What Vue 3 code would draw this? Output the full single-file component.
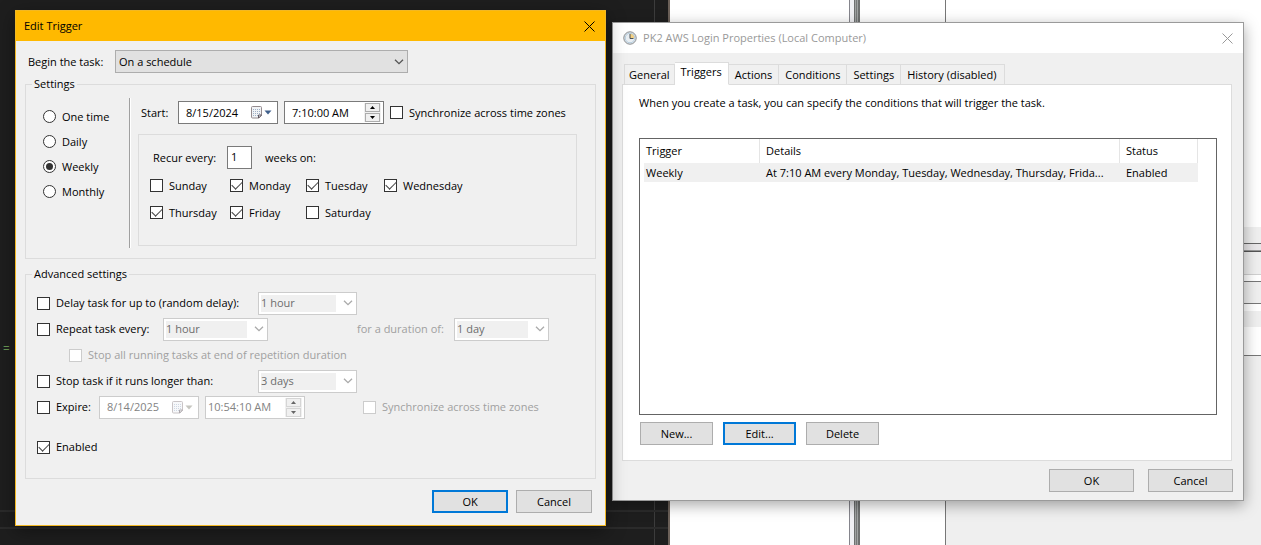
<script setup>
import { ref } from 'vue'

const frequencies = ['One time', 'Daily', 'Weekly', 'Monthly']
const frequency = ref('Weekly')
const days = ref([
  { name: 'Sunday', on: false },
  { name: 'Monday', on: true },
  { name: 'Tuesday', on: true },
  { name: 'Wednesday', on: true },
  { name: 'Thursday', on: true },
  { name: 'Friday', on: true },
  { name: 'Saturday', on: false }
])
const enabled = ref(true)
const tabs = ['General', 'Triggers', 'Actions', 'Conditions', 'Settings', 'History (disabled)']
const activeTab = ref('Triggers')
</script>

<template>
  <div class="desktop">
    <div class="backdrop" aria-hidden="true">
      <div class="editor"><span class="code">=</span></div>
      <div class="page"></div>
      <div class="splitter"></div>
      <div class="pane">
        <div class="stack">
          <i class="s1"></i><i class="s2"></i><i class="s3"></i><i class="s4"></i><i class="s5"></i><i class="s6"></i>
        </div>
      </div>
    </div>

    <section class="window edit" aria-label="Edit Trigger">
      <header class="titlebar">
        <h1>Edit Trigger</h1>
        <button class="close" aria-label="Close">
          <svg width="11" height="11" viewBox="0 0 11 11"><path d="M.5 .5l10 10M10.500 .5l-10 10" /></svg>
        </button>
      </header>

      <div class="begin">
        <label for="begin">Begin the task:</label>
        <span class="combo main">
          <select id="begin"><option>On a schedule</option></select>
          <svg width="10" height="6" viewBox="0 0 10 6"><path d="M1 .7l4 4 4-4" /></svg>
        </span>
      </div>

      <fieldset>
        <legend>Settings</legend>
        <div class="settings">
          <div class="radios">
            <label v-for="f in frequencies" :key="f" class="check">
              <input v-model="frequency" type="radio" name="frequency" :value="f" />{{ f }}
            </label>
          </div>
          <div class="rule"></div>
          <div class="schedule">
            <div class="start">
              <label for="start">Start:</label>
              <span class="field">
                <input id="start" type="text" value="8/15/2024" />
                <button class="calendar" aria-label="Pick start date">
                  <svg width="21" height="13" viewBox="0 0 21 13">
                    <path class="sheet" d="M.5 1.500q0-1 1-1h8q1 0 1 1v8l-2.500 2.500h-6.500q-1 0-1-1z" />
                    <path class="dots" d="M2 3.500h7M2 5.500h7M2 7.500h7M2 9.500h5" />
                    <path class="fold" d="M10.500 9h-3v3z" />
                    <path class="arrow" d="M13.500 4.500h7l-3.500 4z" />
                  </svg>
                </button>
              </span>
              <span class="field">
                <input type="text" value="7:10:00 AM" aria-label="Start time" />
                <span class="spin">
                  <button aria-label="Later"><svg width="5" height="3" viewBox="0 0 5 3"><path d="M0 3l2.500-3 2.500 3z" /></svg></button>
                  <button aria-label="Earlier"><svg width="5" height="3" viewBox="0 0 5 3"><path d="M0 0h5l-2.500 3z" /></svg></button>
                </span>
              </span>
              <label class="check"><input type="checkbox" />Synchronize across time zones</label>
            </div>
            <div class="weekly">
              <div class="recur">
                <label for="recur">Recur every:</label>
                <input id="recur" type="text" value="1" />
                <span>weeks on:</span>
              </div>
              <div class="days">
                <label v-for="d in days" :key="d.name" class="check">
                  <input v-model="d.on" type="checkbox" />{{ d.name }}
                </label>
              </div>
            </div>
          </div>
        </div>
      </fieldset>

      <fieldset class="second">
        <legend>Advanced settings</legend>
        <div class="advanced">
          <div class="line">
            <label class="check lead wide"><input type="checkbox" />Delay task for up to (random delay):</label>
            <span class="combo off">
              <select disabled aria-label="Random delay"><option>1 hour</option></select>
              <svg width="10" height="6" viewBox="0 0 10 6"><path d="M1 .7l4 4 4-4" /></svg>
            </span>
          </div>
          <div class="line">
            <label class="check lead mid"><input type="checkbox" />Repeat task every:</label>
            <span class="combo off long">
              <select disabled aria-label="Repeat interval"><option>1 hour</option></select>
              <svg width="10" height="6" viewBox="0 0 10 6"><path d="M1 .7l4 4 4-4" /></svg>
            </span>
            <label class="duration" for="duration">for a duration of:</label>
            <span class="combo off short">
              <select id="duration" disabled><option>1 day</option></select>
              <svg width="10" height="6" viewBox="0 0 10 6"><path d="M1 .7l4 4 4-4" /></svg>
            </span>
          </div>
          <div class="line nested">
            <label class="check dim"><input type="checkbox" disabled />Stop all running tasks at end of repetition duration</label>
          </div>
          <div class="line">
            <label class="check lead wide"><input type="checkbox" />Stop task if it runs longer than:</label>
            <span class="combo off">
              <select disabled aria-label="Time limit"><option>3 days</option></select>
              <svg width="10" height="6" viewBox="0 0 10 6"><path d="M1 .7l4 4 4-4" /></svg>
            </span>
          </div>
          <div class="line">
            <label class="check lead tight"><input type="checkbox" />Expire:</label>
            <span class="field off">
              <input type="text" value="8/14/2025" disabled aria-label="Expiry date" />
              <button class="calendar" disabled aria-label="Pick expiry date">
                <svg width="21" height="13" viewBox="0 0 21 13">
                  <path class="sheet" d="M.5 1.500q0-1 1-1h8q1 0 1 1v8l-2.500 2.500h-6.500q-1 0-1-1z" />
                  <path class="dots" d="M2 3.500h7M2 5.500h7M2 7.500h7M2 9.500h5" />
                  <path class="fold" d="M10.500 9h-3v3z" />
                  <path class="arrow" d="M13.500 4.500h7l-3.500 4z" />
                </svg>
              </button>
            </span>
            <span class="field off time">
              <input type="text" value="10:54:10 AM" disabled aria-label="Expiry time" />
              <span class="spin">
                <button disabled aria-label="Later"><svg width="5" height="3" viewBox="0 0 5 3"><path d="M0 3l2.500-3 2.500 3z" /></svg></button>
                <button disabled aria-label="Earlier"><svg width="5" height="3" viewBox="0 0 5 3"><path d="M0 0h5l-2.500 3z" /></svg></button>
              </span>
            </span>
            <label class="check dim sync"><input type="checkbox" disabled />Synchronize across time zones</label>
          </div>
          <div class="line last">
            <label class="check"><input v-model="enabled" type="checkbox" />Enabled</label>
          </div>
        </div>
      </fieldset>

      <footer class="edit-actions">
        <button class="btn default">OK</button>
        <button class="btn">Cancel</button>
      </footer>
    </section>

    <section class="window props" aria-label="Task properties">
      <header class="titlebar">
        <svg class="clock" width="14" height="14" viewBox="0 0 14 14">
          <circle cx="7" cy="7" r="6.200" fill="#e9eef2" stroke="#85888b" />
          <path d="M7 7V2.200A4.800 4.800 0 0 1 11.800 7z" fill="#f2cf83" />
          <circle cx="7" cy="7" r="4.800" fill="none" stroke="#b3cbdc" />
          <path d="M7 3v4.500h3.500" fill="none" stroke="#4b5259" />
        </svg>
        <h1>PK2 AWS Login Properties (Local Computer)</h1>
        <button class="close" aria-label="Close">
          <svg width="11" height="11" viewBox="0 0 11 11"><path d="M.5 .5l10 10M10.500 .5l-10 10" /></svg>
        </button>
      </header>

      <div class="tabs" role="tablist">
        <button
          v-for="t in tabs"
          :key="t"
          class="tab"
          :class="{ active: t === activeTab }"
          role="tab"
          :aria-selected="t === activeTab"
          @click="activeTab = t"
        >{{ t }}</button>
      </div>

      <div class="panel" role="tabpanel">
        <p>When you create a task, you can specify the conditions that will trigger the task.</p>
        <div class="list">
          <table>
            <colgroup><col class="c1" /><col /><col class="c3" /></colgroup>
            <thead>
              <tr><th>Trigger</th><th>Details</th><th>Status</th></tr>
            </thead>
            <tbody>
              <tr>
                <td>Weekly</td>
                <td>At 7:10 AM every Monday, Tuesday, Wednesday, Thursday, Frida...</td>
                <td>Enabled</td>
              </tr>
            </tbody>
          </table>
        </div>
        <div class="list-actions">
          <button class="btn">New...</button>
          <button class="btn default">Edit...</button>
          <button class="btn">Delete</button>
        </div>
      </div>

      <footer class="props-actions">
        <button class="btn">OK</button>
        <button class="btn">Cancel</button>
      </footer>
    </section>
  </div>
</template>

<style>
body {
  margin: 0;
  background: #fff;
}
</style>

<style scoped>
* {
  box-sizing: border-box;
}
.desktop {
  position: relative;
  display: flex;
  align-items: flex-start;
  gap: 6px;
  min-height: 100vh;
  padding: 10px 17px 18px 15px;
  overflow: hidden;
  font: 11px/16px "Open Sans", "Noto Sans", sans-serif;
  color: #000;
}
button,
input,
select {
  margin: 0;
  font: inherit;
  color: inherit;
}

/* Applications behind the dialogs */
.backdrop {
  position: absolute;
  inset: 0;
  display: flex;
}
.editor {
  position: relative;
  flex: 668 1 0;
  border-right: 2px solid #6b6058;
  background:
    linear-gradient(#2b2b2b, #2b2b2b) 0 510px / 100% 2px no-repeat,
    linear-gradient(#2b2b2b, #2b2b2b) 0 527px / 100% 2px no-repeat,
    linear-gradient(#3c3c3c, #3c3c3c) right 13px top 0 / 1px 100% no-repeat,
    #1e1e1e;
}
.code {
  position: absolute;
  left: 3px;
  top: 341px;
  color: #6a9955;
  font-family: "Liberation Mono", monospace;
}
.page {
  flex: 179 1 0;
}
.splitter {
  flex: none;
  width: 11px;
  border-left: 1px solid #85858c;
  background: linear-gradient(90deg, #f0f0f4 4px, #6e7070 4px, #6e7070 5px, #a0a3a3 5px, #a0a3a3 6px, #777979 6px, #777979 7px, #a0a3a3 7px, #a0a3a3 8px, #6e7070 8px);
}
.pane {
  flex: 401 1 0;
  min-width: 0;
}
.stack {
  display: flex;
  flex-direction: column;
  height: 100%;
  margin-left: 85px;
  padding-top: 227px;
  border-left: 1px solid #777;
}
.stack i {
  flex: none;
}
.s1 { height: 17px; background: #efefef; border-bottom: 1px solid #666; }
.s2 { height: 7px; background: #e9e7e9; border-bottom: 1px solid #999; }
.s3 { height: 24px; background: #efefef; border-top: 1px solid #555; border-bottom: 1px solid #d0d0d0; }
.s4 { height: 23px; margin-top: 6px; background: #efefef; border-top: 1px solid #777; border-bottom: 1px solid #777; }
.s5 { height: 16px; margin-top: 7px; background: #efefef; }
.stack .s6 { flex: 1; margin-top: 28px; background: #efefef; border-top: 1px solid #777; }

/* Windows */
.window {
  position: relative;
  min-width: 0;
  background: #f0f0f0;
}
.edit {
  z-index: 2;
  flex: 591 1 0;
  border: 1px solid #f2b824;
  box-shadow: 0 5px 18px rgba(0, 0, 0, 0.4);
}
.props {
  z-index: 1;
  flex: 632 1 0;
  margin-top: 12px;
  border: 1px solid #9a9a9a;
  box-shadow: 0 4px 14px rgba(0, 0, 0, 0.35);
}
.titlebar {
  display: flex;
  align-items: center;
  height: 30px;
  padding: 0 10px;
}
.edit .titlebar {
  padding: 0 10px 0 8px;
  background: #ffb900;
}
.props .titlebar {
  gap: 6px;
  background: #fff;
  color: #999;
}
h1 {
  flex: 1;
  margin: 0;
  font-size: 11px;
  font-weight: 400;
  white-space: nowrap;
}
.close {
  display: flex;
  padding: 0;
  border: 0;
  background: none;
}
.close svg {
  fill: none;
  stroke: currentColor;
}

.begin {
  display: flex;
  align-items: center;
  margin-top: 9px;
  padding-left: 12px;
}
.begin label {
  width: 87px;
}

/* Drop-downs */
.combo {
  display: flex;
  align-items: center;
  width: 99px;
  height: 23px;
  padding: 2px 3px 2px 2px;
  border: 1px solid #adadad;
  background: #e1e1e1;
}
.combo.main {
  width: 293px;
}
.combo.long {
  width: 105px;
}
.combo.short {
  width: 95px;
}
.combo select {
  flex: 1;
  min-width: 0;
  height: 100%;
  margin-right: 7px;
  padding: 0 0 0 1px;
  border: 0;
  border-radius: 0;
  appearance: none;
  background: none;
  opacity: 1;
}
.combo svg {
  flex: none;
  fill: none;
  stroke: #555;
  stroke-width: 1.3;
  pointer-events: none;
}
.combo.off {
  border-color: #ccc;
  background: #fff;
  color: #6d6d6d;
}
.combo.off select {
  background: #f0f0f0;
  padding-left: 0;
}
.combo.off svg {
  stroke: #aaa;
}

/* Groups */
fieldset {
  min-width: 0;
  margin: 3px 9px 0;
  padding: 0;
  border: 1px solid #dcdcdc;
}
fieldset.second {
  margin-top: 7px;
}
legend {
  margin-left: 6px;
  padding: 0 2px;
}
.settings {
  display: flex;
  padding-bottom: 10px;
}
.radios {
  width: 103px;
  padding: 12px 0 0 17px;
}
.radios .check {
  height: 25px;
}
.rule {
  width: 2px;
  margin-top: 6px;
  border-left: 1px solid #a0a0a0;
  border-right: 1px solid #fff;
}
.schedule {
  flex: 1;
  min-width: 0;
  padding: 9px 18px 2px 7px;
}
.start {
  display: flex;
  align-items: center;
  gap: 6px;
  padding-left: 3px;
}
.start > label:first-child {
  width: 31px;
}

/* Tick boxes and radios */
.check {
  display: flex;
  align-items: center;
  gap: 6px;
  white-space: nowrap;
}
.check input {
  flex: none;
  display: flex;
  justify-content: center;
  width: 13px;
  height: 13px;
  border: 1px solid #333;
  background: #fff;
  appearance: none;
}
.check input[type="checkbox"]:checked::before {
  content: "";
  width: 9px;
  height: 5px;
  margin-top: 1px;
  border: solid #444;
  border-width: 0 0 1px 1px;
  transform: rotate(-45deg);
}
.check input[type="radio"] {
  align-items: center;
  border-radius: 50%;
}
.check input[type="radio"]:checked::before {
  content: "";
  width: 7px;
  height: 7px;
  border-radius: 50%;
  background: #333;
}
.check input:disabled {
  border-color: #ccc;
}
.dim,
.duration {
  color: #a0a0a0;
}

/* Date and time fields */
.field {
  display: flex;
  align-items: center;
  width: 100px;
  height: 23px;
  padding: 1px 2px 1px 7px;
  border: 1px solid #7a7a7a;
  background: #fff;
}
.field input {
  flex: 1;
  min-width: 0;
  padding: 0;
  border: 0;
  outline: 0;
  background: none;
}
.field.off {
  border-color: #ccc;
  color: #838383;
}
.field.time {
  margin-left: 6px;
  padding-left: 2px;
}
.calendar {
  display: flex;
  padding: 0 3px 0 0;
  border: 0;
  background: none;
}
.sheet {
  fill: #f1f3f6;
  stroke: #948b8e;
}
.fold {
  fill: #fff;
  stroke: #5f5660;
}
.dots {
  fill: none;
  stroke: #9fb0c6;
  stroke-dasharray: 1 1;
}
.arrow {
  fill: #40608c;
}
.off .calendar svg {
  opacity: 0.5;
}
.off .arrow {
  fill: #8c8c80;
}
.spin {
  display: flex;
  flex-direction: column;
  gap: 1px;
  padding: 0 1px;
  background: #f0f0f0;
}
.spin button {
  display: flex;
  align-items: center;
  justify-content: center;
  width: 15px;
  height: 9px;
  padding: 0;
  border: 1px solid #acacac;
  background: #f0f0f0;
}
.off .spin button {
  border-color: #d5d5d5;
  color: #666;
}
.spin svg {
  fill: currentColor;
}

.weekly {
  margin-top: 10px;
  padding: 11px 11px 19px;
  border: 1px solid #dcdcdc;
}
.recur {
  display: flex;
  align-items: center;
  padding-left: 3px;
}
.recur label {
  width: 74px;
}
.recur input {
  width: 25px;
  height: 23px;
  margin-right: 13px;
  padding: 0 3px 2px;
  border: 1px solid #7a7a7a;
  outline: 0;
  background: #fff;
}
.days {
  display: grid;
  grid-template-columns: 80px 76px 78px 1fr;
  grid-auto-rows: 27px;
  margin-top: 3px;
}

.advanced {
  padding: 8px 11px 18px;
}
.line {
  display: flex;
  align-items: center;
  height: 26px;
}
.nested {
  padding-left: 32px;
}
.lead.wide {
  width: 221px;
}
.lead.mid {
  width: 126px;
}
.lead.tight {
  width: 62px;
}
.duration {
  width: 97px;
  margin-left: 89px;
}
.sync {
  margin-left: 58px;
}
.last {
  margin-top: 14px;
}

/* Push buttons */
.btn {
  width: 73px;
  height: 23px;
  padding: 0;
  border: 1px solid #adadad;
  background: #e1e1e1;
}
.btn.default {
  border: 2px solid #0078d7;
}
.edit-actions {
  display: flex;
  justify-content: flex-end;
  gap: 8px;
  padding: 11px 13px 12px;
}
.edit-actions .btn {
  width: 76px;
}

/* Properties dialog */
.tabs {
  display: flex;
  align-items: flex-end;
  margin: 9px 11px 0;
}
.tab {
  height: 21px;
  margin-bottom: -1px;
  padding: 0 6px;
  border: 1px solid #dcdcdc;
  border-left-width: 0;
  background: #f0f0f0;
  white-space: nowrap;
}
.tab:first-child {
  padding: 0 4px;
  border-left-width: 1px;
}
.tab.active {
  position: relative;
  height: 23px;
  padding-bottom: 3px;
  border-bottom-color: #fff;
  background: #fff;
}
.tab:last-child {
  padding-right: 8px;
}
.panel {
  margin: 0 11px 0 9px;
  padding: 10px 14px 15px 16px;
  border: 1px solid #dcdcdc;
  background: #fff;
}
.panel p {
  margin: 0 0 27px;
}
.list {
  min-height: 277px;
  padding: 0 18px 0 4px;
  border: 1px solid #646464;
}
table {
  width: 100%;
  table-layout: fixed;
  border-collapse: separate;
  border-spacing: 0;
}
.c1 {
  width: 116px;
}
.c3 {
  width: 78px;
}
th,
td {
  height: 24px;
  padding: 0 6px;
  overflow: hidden;
  font-weight: 400;
  text-align: left;
  white-space: nowrap;
}
th {
  border-right: 1px solid #e5e5e5;
}
td {
  height: 19px;
  background: #f0f0f0;
}
th:first-child,
td:first-child {
  padding-left: 2px;
}
.list-actions {
  display: flex;
  gap: 10px;
  margin: 7px 0 0 1px;
}
.props-actions {
  display: flex;
  justify-content: flex-end;
  gap: 14px;
  padding: 8px 10px 8px;
}
.props-actions .btn {
  width: 85px;
}
</style>
